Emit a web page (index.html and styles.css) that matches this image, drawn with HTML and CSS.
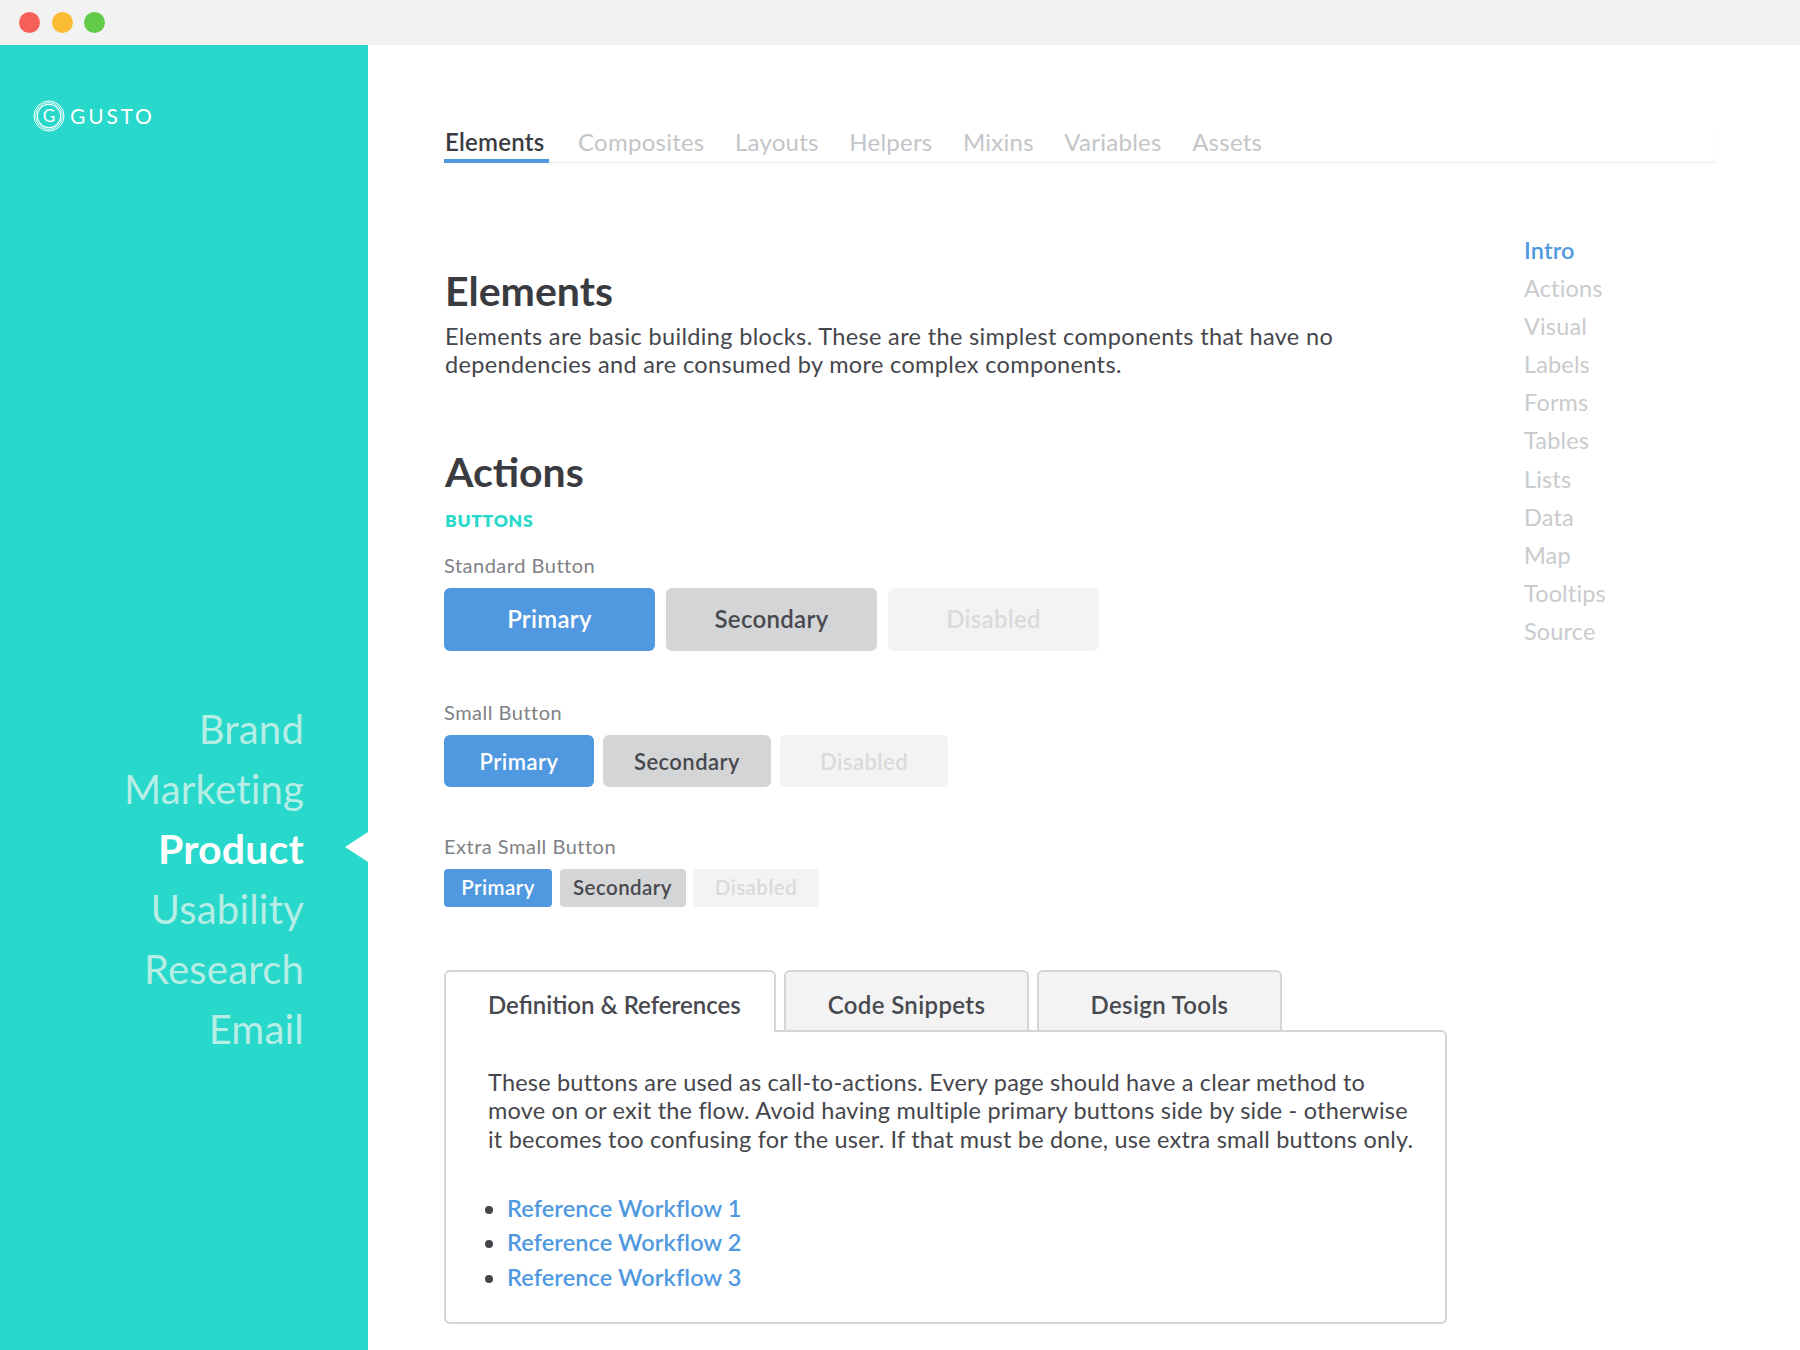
FILE: index.html
```html
<!DOCTYPE html>
<html lang="en">
  <head>
    <meta charset="UTF-8" />
    <title>Gusto Style Guide - Elements</title>
    <link rel="stylesheet" href="styles.css">
  </head>
  <body>
    <div class="titlebar">
      <span class="dot dot-red"></span>
      <span class="dot dot-yellow"></span>
      <span class="dot dot-green"></span>
    </div>
    <div class="window">
      <aside class="sidebar">
        <div class="logo">
          <svg class="logo-mark" width="32" height="32" viewBox="0 0 32 32">
            <circle cx="16" cy="16" r="15" fill="none" stroke="#fff" stroke-width="1"/>
            <circle cx="16" cy="16" r="13.4" fill="none" stroke="#fff" stroke-width="0.8"/>
            <circle cx="16" cy="16" r="11.6" fill="none" stroke="#fff" stroke-width="1.2"/>
            <text x="16" y="21.5" text-anchor="middle" class="logo-g">G</text>
          </svg>
          <span class="logo-text">GUSTO</span>
        </div>
        <nav class="side-nav">
          <a>Brand</a>
          <a>Marketing</a>
          <a class="active">Product</a>
          <a>Usability</a>
          <a>Research</a>
          <a>Email</a>
        </nav>
      </aside>
      <main class="main">
        <div class="top-tabs">
          <a class="active">Elements</a>
          <a>Composites</a>
          <a>Layouts</a>
          <a>Helpers</a>
          <a>Mixins</a>
          <a>Variables</a>
          <a>Assets</a>
        </div>
        <div class="columns">
          <div class="content">
            <h1>Elements</h1>
            <p class="intro">Elements are basic building blocks. These are the simplest components that have no dependencies and are consumed by more complex components.</p>
            <h1 class="actions-title">Actions</h1>
            <h3 class="eyebrow">BUTTONS</h3>

            <div class="btn-label">Standard Button</div>
            <div class="btn-row">
              <span class="btn btn-lg btn-primary">Primary</span>
              <span class="btn btn-lg btn-secondary">Secondary</span>
              <span class="btn btn-lg btn-disabled">Disabled</span>
            </div>

            <div class="btn-label label-sm">Small Button</div>
            <div class="btn-row row-sm">
              <span class="btn btn-sm btn-primary">Primary</span>
              <span class="btn btn-sm btn-secondary secondary-sm">Secondary</span>
              <span class="btn btn-sm btn-disabled secondary-sm">Disabled</span>
            </div>

            <div class="btn-label label-xs">Extra Small Button</div>
            <div class="btn-row row-xs">
              <span class="btn btn-xs btn-primary">Primary</span>
              <span class="btn btn-xs btn-secondary secondary-xs">Secondary</span>
              <span class="btn btn-xs btn-disabled secondary-xs">Disabled</span>
            </div>

            <div class="doc-tabs">
              <a class="doc-tab doc-tab-active">Definition &amp; References</a>
              <a class="doc-tab">Code Snippets</a>
              <a class="doc-tab">Design Tools</a>
            </div>
            <div class="doc-panel">
              <p>These buttons are used as call-to-actions. Every page should have a clear method to move on or exit the flow. Avoid having multiple primary buttons side by side - otherwise it becomes too confusing for the user. If that must be done, use extra small buttons only.</p>
              <ul>
                <li><a>Reference Workflow 1</a></li>
                <li><a>Reference Workflow 2</a></li>
                <li><a>Reference Workflow 3</a></li>
              </ul>
            </div>
          </div>
          <nav class="page-nav">
            <a class="active">Intro</a>
            <a>Actions</a>
            <a>Visual</a>
            <a>Labels</a>
            <a>Forms</a>
            <a>Tables</a>
            <a>Lists</a>
            <a>Data</a>
            <a>Map</a>
            <a>Tooltips</a>
            <a>Source</a>
          </nav>
        </div>
      </main>
    </div>
  </body>
</html>
```

FILE: styles.css
```css
* {
  box-sizing: border-box;
}

html,
body {
  margin: 0;
  height: 1350px;
  overflow: hidden;
}

body {
  font-family: "Lato", "Liberation Sans", sans-serif;
  color: #45464b;
  background-color: white;
}

.titlebar {
  height: 45px;
  background-color: #f2f2f2;
  display: flex;
  align-items: center;
  padding-left: 19px;
}

.dot {
  width: 21px;
  height: 21px;
  border-radius: 50%;
  margin-right: 12px;
}

.dot-red {
  background-color: #f65f5a;
}

.dot-yellow {
  background-color: #fbbc33;
}

.dot-green {
  background-color: #62cb47;
  margin-left: -1px;
}

.window {
  display: flex;
  height: 1305px;
}

.sidebar {
  width: 368px;
  flex-shrink: 0;
  background-color: #28d8ca;
  padding-top: 54px;
}

.logo {
  display: flex;
  align-items: center;
  height: 32px;
  padding-left: 33px;
}

.logo-mark {
  margin-top: 2px;
}

.logo-g {
  font-size: 17px;
  fill: white;
}

.logo-text {
  margin-left: 5px;
  color: white;
  font-size: 21px;
  letter-spacing: 2.8px;
}

.side-nav {
  margin-top: 568px;
  display: flex;
  flex-direction: column;
  align-items: flex-end;
  padding-right: 64px;
}

.side-nav a {
  position: relative;
  height: 60px;
  line-height: 60px;
  font-size: 40px;
  letter-spacing: 0.2px;
  font-weight: 400;
  color: #b6ede5;
}

.side-nav a.active {
  color: white;
  font-size: 41px;
  font-weight: 700;
}

.side-nav a.active::after {
  content: "";
  position: absolute;
  top: 13px;
  right: -64px;
  border-top: 15px solid transparent;
  border-bottom: 15px solid transparent;
  border-right: 23px solid white;
}

.main {
  flex: 1;
  padding: 79px 84px 0 77px;
}

.top-tabs {
  display: flex;
  height: 39px;
  margin-left: -1px;
  border-bottom: 2px solid #f3f3f3;
  box-shadow: 0 2px 3px #fafafa;
}

.top-tabs a {
  height: 39px;
  line-height: 35px;
  font-size: 24px;
  letter-spacing: 0.25px;
  color: #c3c5c8;
  margin-right: 28.5px;
  padding: 0 1px;
}

.top-tabs a.active {
  color: #3a3b40;
  font-weight: 600;
  border-bottom: 4px solid #5099e0;
  padding-right: 4px;
}

.columns {
  display: flex;
}

.content {
  width: 1002px;
}

h1 {
  margin: 0;
  font-size: 41px;
  line-height: 48px;
  font-weight: 700;
  color: #3a3b40;
}

.content > h1:first-child {
  margin-top: 104px;
}

.intro {
  margin: 7px 0 0;
  width: 920px;
  font-size: 23.5px;
  letter-spacing: 0.35px;
  line-height: 28px;
}

.actions-title {
  margin-top: 70px;
}

.eyebrow {
  margin: 14px 0 0;
  font-size: 17.5px;
  line-height: 22px;
  letter-spacing: 0.7px;
  font-weight: 800;
  color: #28d8ca;
}

.btn-label {
  margin-top: 21px;
  margin-left: -1px;
  font-size: 20px;
  letter-spacing: 0.5px;
  line-height: 24px;
  color: #808186;
}

.label-sm {
  margin-top: 49px;
}

.label-xs {
  margin-top: 47px;
}

.btn-row {
  display: flex;
  gap: 11px;
  margin-top: 11px;
  margin-left: -1px;
}

.row-sm {
  gap: 9px;
}

.row-xs {
  gap: 7.5px;
}

.btn {
  display: flex;
  align-items: center;
  justify-content: center;
  border-radius: 6px;
}

.btn-lg {
  width: 211px;
  height: 63px;
  font-size: 24px;
  letter-spacing: 0.3px;
  padding-bottom: 3px;
}

.btn-sm {
  width: 150px;
  height: 52px;
  font-size: 22px;
  letter-spacing: 0.45px;
}

.secondary-sm {
  width: 168px;
}

.btn-xs {
  width: 108px;
  height: 38px;
  font-size: 20.5px;
  letter-spacing: 0.45px;
  border-radius: 4px;
  padding-bottom: 2px;
}

.secondary-xs {
  width: 126px;
}

.btn-primary {
  background-color: #5099e0;
  color: white;
  font-weight: 600;
}

.btn-secondary {
  background-color: #d4d5d7;
  color: #48494e;
  font-weight: 600;
}

.btn-disabled {
  background-color: #f3f3f4;
  color: #d9dadc;
  font-weight: 600;
}

.doc-tabs {
  display: flex;
  gap: 8px;
  margin-top: 63px;
  margin-left: -1px;
  height: 60px;
}

.doc-tab {
  width: 245px;
  height: 60px;
  line-height: 66px;
  text-align: center;
  font-size: 24px;
  letter-spacing: 0.35px;
  font-weight: 600;
  color: #48494e;
  background-color: #f3f3f4;
  border: 2px solid #d4d5d7;
  border-bottom: none;
  border-radius: 6px 6px 0 0;
}

.doc-tab-active {
  position: relative;
  z-index: 1;
  width: 332px;
  height: 62px;
  letter-spacing: 0;
  background-color: white;
  text-align: left;
  padding-left: 42px;
}

.doc-panel {
  height: 294px;
  margin-left: -1px;
  padding: 36px 20px 0 42px;
  border: 2px solid #d4d5d7;
  border-radius: 0 6px 6px 6px;
}

.doc-panel p {
  margin: 0;
  font-size: 23.5px;
  letter-spacing: 0.2px;
  line-height: 28.3px;
}

.doc-panel ul {
  margin: 38px 0 0;
  padding: 0 0 0 19px;
  font-size: 23.5px;
}

.doc-panel li {
  line-height: 34.4px;
}

.doc-panel a {
  color: #5099e0;
  font-weight: 600;
  letter-spacing: 0.1px;
}

.page-nav {
  display: flex;
  flex-direction: column;
  margin-top: 68px;
  margin-left: 77px;
}

.page-nav a {
  height: 38.1px;
  line-height: 38px;
  font-size: 23.5px;
  letter-spacing: 0.15px;
  color: #c9cbcd;
}

.page-nav a.active {
  color: #5099e0;
  font-weight: 600;
}
```
